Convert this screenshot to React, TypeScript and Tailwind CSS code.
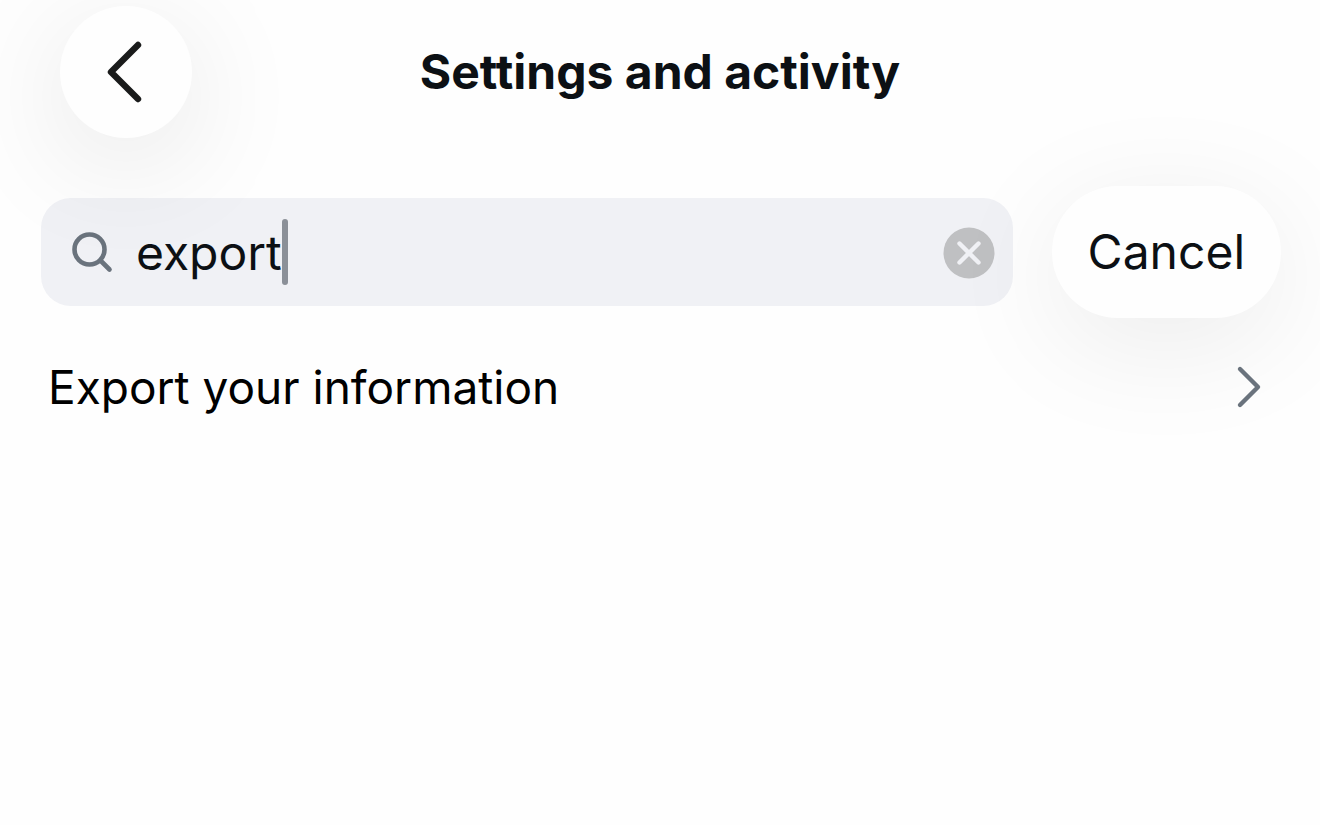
import React, { useState } from 'react';

const settings = [
  { id: 'export', label: 'Export your information', href: '#export' },
];

export default function App() {
  const [query, setQuery] = useState('export');

  const results = settings.filter((s) =>
    s.label.toLowerCase().includes(query.toLowerCase())
  );

  return (
    <div className="min-h-screen overflow-hidden bg-[#fefefe] font-['Inter',sans-serif] text-[#0c1014]">
      {/* Header */}
      <header className="relative z-10 grid grid-cols-[132px_1fr_132px] items-center px-15 pt-1.5">
        <button
          type="button"
          aria-label="Back"
          className="flex size-33 items-center justify-center rounded-full bg-[#fefefe] shadow-[0_24px_120px_rgba(0,0,0,0.1)]"
        >
          <svg viewBox="0 0 132 132" className="size-33" fill="none" stroke="#1a1b1b" strokeWidth="6.4" strokeLinecap="round" strokeLinejoin="round">
            <path d="M78 39 51 66l27 27" />
          </svg>
        </button>
        <h1 className="text-center text-[48px] leading-15 font-bold">Settings and activity</h1>
      </header>

      {/* Search */}
      <div className="mt-12 flex items-center gap-[39px] pr-[39px] pl-[41px]">
        <div className="flex h-27 min-w-0 flex-1 items-center rounded-[30px] bg-[#f0f1f5] pr-[18px] pl-[27px]">
          <svg viewBox="0 0 48 48" className="size-12 shrink-0" fill="none" stroke="#6a737d" strokeWidth="4.6" strokeLinecap="round">
            <circle cx="21.5" cy="21.5" r="15" />
            <path d="m32.5 32.5 9 9" />
          </svg>
          <label htmlFor="settings-search" className="ml-5 flex min-w-0 flex-1 items-center">
            <input
              id="settings-search"
              type="text"
              aria-label="Search settings"
              value={query}
              onChange={(e) => setQuery(e.target.value)}
              className="field-sizing-content bg-transparent pt-0.5 text-[48px] leading-15 caret-transparent outline-none"
            />
            <span className="h-[66px] w-1.5 rounded-full bg-[#8b9098]" />
          </label>
          <button type="button" aria-label="Clear search" onClick={() => setQuery('')} className="shrink-0 pt-0.5">
            <svg viewBox="0 0 52 52" className="size-13">
              <circle cx="26" cy="26" r="25.5" fill="#bfc0c2" />
              <path d="m16.5 16.5 19 19M35.5 16.5l-19 19" stroke="#f0f1f5" strokeWidth="4.4" strokeLinecap="round" />
            </svg>
          </button>
        </div>
        <button
          type="button"
          onClick={() => setQuery('')}
          className="relative h-33 shrink-0 rounded-full bg-[#fefefe] px-9 text-[48px] leading-15 shadow-[0_24px_120px_rgba(0,0,0,0.08)]"
        >
          Cancel
        </button>
      </div>

      {/* Results */}
      <ul className="relative">
        {results.map((s) => (
          <li key={s.id}>
            <a href={s.href} className="flex h-[138px] items-center justify-between px-12 text-[46px] leading-15 text-black">
              <span>{s.label}</span>
              <svg viewBox="0 0 48 48" className="size-12 shrink-0" fill="none" stroke="#6a737d" strokeWidth="4.4" strokeLinecap="round" strokeLinejoin="round">
                <path d="m16 6 18 18-18 18" />
              </svg>
            </a>
          </li>
        ))}
      </ul>
    </div>
  );
}
